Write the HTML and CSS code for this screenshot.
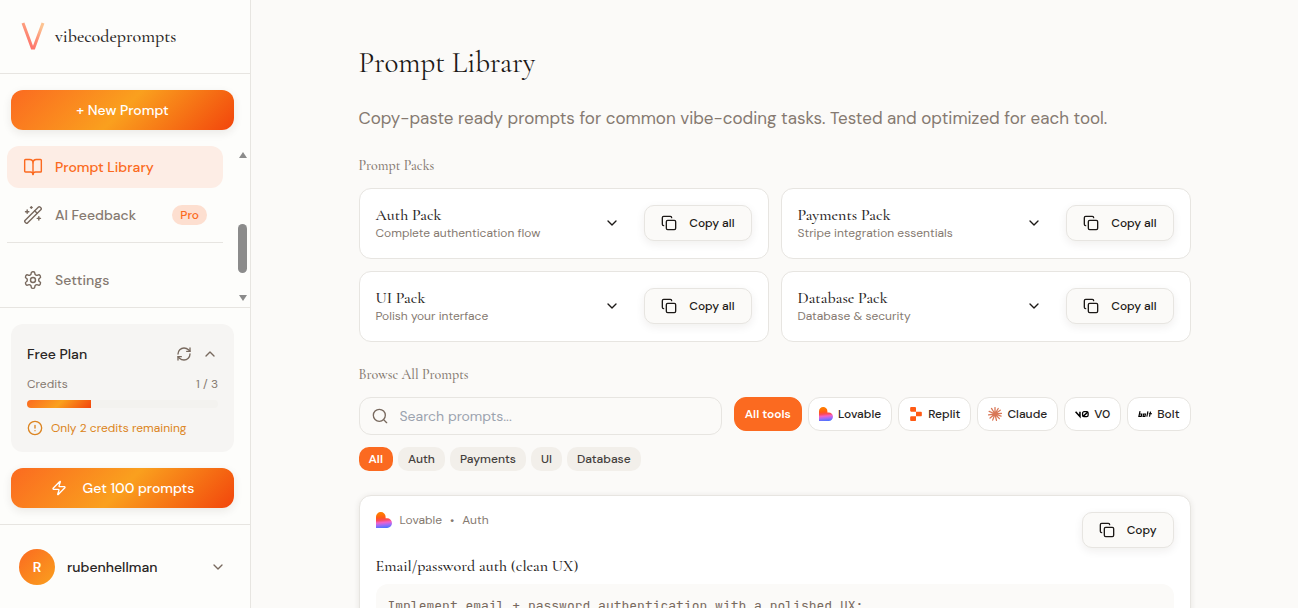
FILE: index.html
```html
<!DOCTYPE html>
<html lang="en">
<head>
<meta charset="utf-8">
<meta name="viewport" content="width=device-width, initial-scale=1">
<title>Prompt Library</title>
<link rel="stylesheet" href="styles.css">
</head>
<body>
<svg class="defs" aria-hidden="true">
  <defs>
    <linearGradient id="v-grad" x1="0" y1="1" x2="0.7" y2="0"><stop offset="0" stop-color="#ff6464"/><stop offset="0.5" stop-color="#fd8b74"/><stop offset="1" stop-color="#fdc391"/></linearGradient>
    <linearGradient id="love-grad" x1="0.4" y1="0" x2="0.5" y2="1"><stop offset="0.1" stop-color="#ff7a00"/><stop offset="0.35" stop-color="#ff5a1a"/><stop offset="0.5" stop-color="#fb4a5a"/><stop offset="0.65" stop-color="#f062c8"/><stop offset="0.8" stop-color="#a56af5"/><stop offset="1" stop-color="#4b73ff"/></linearGradient>
  </defs>
  <symbol id="copy" viewBox="0 0 24 24"><rect x="8" y="8" width="14" height="14" rx="2"/><path d="M4 16c-1.100 0-2-.9-2-2V4c0-1.100.9-2 2-2h10c1.100 0 2 .9 2 2"/></symbol>
  <symbol id="down" viewBox="0 0 24 24"><path d="m6 9 6 6 6-6"/></symbol>
  <symbol id="lovable" viewBox="0 0 24 24"><path fill="url(#love-grad)" stroke="none" d="M0 7.200a7.200 7.200 0 0 1 14.400 0v2.300h2.300a7.200 7.200 0 0 1 0 14.500H0z"/></symbol>
</svg>
<div class="app">
  <aside class="sidebar">
    <a class="brand" href="#">
      <svg class="brand-mark" viewBox="0 0 24 28" aria-hidden="true"><path d="M2 1 11.200 26h1.600L22 1" fill="none" stroke="url(#v-grad)" stroke-width="3"/></svg>
      <span>vibecodeprompts</span>
    </a>
    <div class="new-wrap"><button class="cta" type="button">+ New Prompt</button></div>
    <div class="nav-area">
      <nav class="nav">
        <a class="nav-item active" href="#"><svg class="icon i20" viewBox="0 0 24 24"><path d="M12 7v14"/><path d="M3 18a1 1 0 0 1-1-1V4a1 1 0 0 1 1-1h5a4 4 0 0 1 4 4 4 4 0 0 1 4-4h5a1 1 0 0 1 1 1v13a1 1 0 0 1-1 1h-6a3 3 0 0 0-3 3 3 3 0 0 0-3-3z"/></svg>Prompt Library</a>
        <a class="nav-item" href="#"><svg class="icon i20" viewBox="0 0 24 24"><path d="m21.640 3.640-1.280-1.280a1.210 1.210 0 0 0-1.720 0L2.360 18.640a1.210 1.210 0 0 0 0 1.720l1.280 1.280a1.200 1.200 0 0 0 1.720 0L21.640 5.360a1.200 1.200 0 0 0 0-1.720"/><path d="m14 7 3 3"/><path d="M5 6v4M19 14v4M10 2v2M7 8H3M21 16h-4M11 3H9"/></svg>AI Feedback<span class="pro">Pro</span></a>
        <div class="rule"></div>
        <a class="nav-item" href="#"><svg class="icon i20" viewBox="0 0 24 24"><path d="M12.220 2h-.440a2 2 0 0 0-2 2v.180a2 2 0 0 1-1 1.730l-.430.250a2 2 0 0 1-2 0l-.150-.080a2 2 0 0 0-2.730.730l-.220.380a2 2 0 0 0 .730 2.730l.150.100a2 2 0 0 1 1 1.720v.510a2 2 0 0 1-1 1.740l-.150.090a2 2 0 0 0-.730 2.730l.220.380a2 2 0 0 0 2.730.730l.150-.080a2 2 0 0 1 2 0l.430.250a2 2 0 0 1 1 1.730V20a2 2 0 0 0 2 2h.440a2 2 0 0 0 2-2v-.180a2 2 0 0 1 1-1.730l.430-.250a2 2 0 0 1 2 0l.150.080a2 2 0 0 0 2.730-.730l.220-.390a2 2 0 0 0-.730-2.730l-.150-.080a2 2 0 0 1-1-1.740v-.500a2 2 0 0 1 1-1.740l.150-.090a2 2 0 0 0 .730-2.730l-.220-.380a2 2 0 0 0-2.730-.730l-.150.080a2 2 0 0 1-2 0l-.430-.250a2 2 0 0 1-1-1.730V4a2 2 0 0 0-2-2z"/><circle cx="12" cy="12" r="3"/></svg>Settings</a>
      </nav>
      <div class="scrollbar" aria-hidden="true"><span class="arrow-up"></span><span class="thumb"></span><span class="arrow-down"></span></div>
    </div>
    <div class="plan-wrap">
      <section class="plan">
        <div class="plan-head">
          <h2>Free Plan</h2>
          <button class="bare" type="button" aria-label="Refresh credits"><svg class="icon i16" viewBox="0 0 24 24"><path d="M3 12a9 9 0 0 1 9-9 9.750 9.750 0 0 1 6.740 2.740L21 8"/><path d="M21 3v5h-5"/><path d="M21 12a9 9 0 0 1-9 9 9.750 9.750 0 0 1-6.740-2.740L3 16"/><path d="M8 16H3v5"/></svg></button>
          <button class="bare" type="button" aria-label="Collapse plan"><svg class="icon i16" viewBox="0 0 24 24"><path d="m18 15-6-6-6 6"/></svg></button>
        </div>
        <div class="credits"><span>Credits</span><span>1 / 3</span></div>
        <div class="meter"><div class="meter-fill" style="width:33.33%"></div></div>
        <p class="warn"><svg class="icon i16" viewBox="0 0 24 24"><circle cx="12" cy="12" r="10"/><path d="M12 8v4M12 16h.01"/></svg>Only 2 credits remaining</p>
      </section>
      <button class="cta" type="button"><svg class="icon i16" viewBox="0 0 24 24"><path d="M4 14a1 1 0 0 1-.780-1.630l9.900-10.200a.5.5 0 0 1 .860.460l-1.920 6.020A1 1 0 0 0 13 10h7a1 1 0 0 1 .780 1.630l-9.900 10.200a.5.5 0 0 1-.860-.460l1.920-6.020A1 1 0 0 0 11 14z"/></svg>Get 100 prompts</button>
    </div>
    <button class="user" type="button"><span class="avatar">R</span><span class="user-name">rubenhellman</span><svg class="icon i16"><use href="#down"/></svg></button>
  </aside>

  <main class="main">
    <div class="content">
      <h1>Prompt Library</h1>
      <p class="lead">Copy-paste ready prompts for common vibe-coding tasks. Tested and optimized for each tool.</p>
      <h2 class="section">Prompt Packs</h2>
      <div class="packs">
        <article class="pack"><div class="pack-text"><h3>Auth Pack</h3><p>Complete authentication flow</p></div><button class="bare dark" type="button" aria-label="Expand Auth Pack"><svg class="icon i16"><use href="#down"/></svg></button><button class="copy" type="button"><svg class="icon i16"><use href="#copy"/></svg>Copy all</button></article>
        <article class="pack"><div class="pack-text"><h3>Payments Pack</h3><p>Stripe integration essentials</p></div><button class="bare dark" type="button" aria-label="Expand Payments Pack"><svg class="icon i16"><use href="#down"/></svg></button><button class="copy" type="button"><svg class="icon i16"><use href="#copy"/></svg>Copy all</button></article>
        <article class="pack"><div class="pack-text"><h3>UI Pack</h3><p>Polish your interface</p></div><button class="bare dark" type="button" aria-label="Expand UI Pack"><svg class="icon i16"><use href="#down"/></svg></button><button class="copy" type="button"><svg class="icon i16"><use href="#copy"/></svg>Copy all</button></article>
        <article class="pack"><div class="pack-text"><h3>Database Pack</h3><p>Database &amp; security</p></div><button class="bare dark" type="button" aria-label="Expand Database Pack"><svg class="icon i16"><use href="#down"/></svg></button><button class="copy" type="button"><svg class="icon i16"><use href="#copy"/></svg>Copy all</button></article>
      </div>
      <h2 class="section browse">Browse All Prompts</h2>
      <div class="filters">
        <label class="search"><svg class="icon i16" viewBox="0 0 24 24"><circle cx="11" cy="11" r="9"/><path d="m22 22-4.600-4.600"/></svg><input type="search" placeholder="Search prompts..." aria-label="Search prompts"></label>
        <div class="tools">
          <button class="tool on" type="button">All tools</button>
          <button class="tool" type="button"><svg class="i14"><use href="#lovable"/></svg>Lovable</button>
          <button class="tool" type="button"><svg class="i14" viewBox="0 0 24 24"><path fill="#ff5a14" d="M2 1.500C2 .7 2.700 0 3.500 0h7c.8 0 1.500.7 1.500 1.500V8H3.500C2.700 8 2 7.300 2 6.500zM12 8h8.500c.8 0 1.500.7 1.500 1.500v5c0 .8-.7 1.500-1.500 1.500H12zM2 17.500c0-.8.7-1.500 1.500-1.500H12v6.500c0 .8-.7 1.500-1.500 1.500h-7C2.700 24 2 23.300 2 22.500z"/></svg>Replit</button>
          <button class="tool" type="button"><svg class="i14" viewBox="0 0 24 24"><path fill="none" stroke="#d97757" stroke-width="2.200" stroke-linecap="round" d="M12 12V1M12 12l5.500-9.500M12 12l9-6.500M12 12l11-1M12 12l10.500 3.500M12 12l7.500 8M12 12l2.500 11M12 12l-4 10.500M12 12l-8.500 7M12 12l-11 1.500M12 12 2 7.500M12 12 6 2.500"/></svg>Claude</button>
          <button class="tool" type="button"><svg class="i14" viewBox="0 0 24 24"><path fill="none" stroke="#000" stroke-width="2.600" d="m1 8 7.500 8.200V8M13.500 16.500 22 8.500"/><rect x="13" y="8" width="9.500" height="8.500" rx="2.500" fill="none" stroke="#000" stroke-width="2.200"/></svg>V0</button>
          <button class="tool" type="button"><svg class="i14" viewBox="0 0 24 24"><path fill="none" stroke="#000" stroke-width="2" d="M3.500 7 1.500 16h4l.9-4H2.500M9.500 12h3.200l-.8 4H8.700zM17 7.500l-1.800 9M21.500 8l-1.800 8.500M18.500 11.500H24"/></svg>Bolt</button>
        </div>
      </div>
      <div class="cats">
        <button class="cat on" type="button">All</button><button class="cat" type="button">Auth</button><button class="cat" type="button">Payments</button><button class="cat" type="button">UI</button><button class="cat" type="button">Database</button>
      </div>
      <article class="prompt">
        <div class="prompt-head">
          <p class="meta"><svg class="i16"><use href="#lovable"/></svg><span>Lovable</span><span>•</span><span>Auth</span></p>
          <button class="copy" type="button"><svg class="icon i16"><use href="#copy"/></svg>Copy</button>
        </div>
        <h3>Email/password auth (clean UX)</h3>
        <pre class="code">Implement email + password authentication with a polished UX:</pre>
      </article>
    </div>
  </main>
</div>
</body>
</html>
```
FILE: styles.css
```css
:root {
  --sans: "DM Sans", Inter, "Liberation Sans", sans-serif;
  --serif: "Cormorant Garamond", "Liberation Serif", serif;
  --ink: #292524;
  --muted: #857970;
  --line: #e7e5e1;
  --orange: #fb6a20;
  --fire: linear-gradient(135deg, #fb6a20 0%, #faa01e 50%, #f2450c 100%);
}
* { box-sizing: border-box; }
body { margin: 0; background: #fbfaf8; color: var(--ink); font: 14px/20px var(--sans); }
h1, h2, h3, p, pre { margin: 0; font-weight: 400; }
button, input { font: inherit; color: inherit; }
button { cursor: pointer; border: 0; }
a { color: inherit; text-decoration: none; }
svg { flex: none; display: block; }
.defs { position: absolute; width: 0; height: 0; }
.icon { fill: none; stroke: currentColor; stroke-width: 2; stroke-linecap: round; stroke-linejoin: round; }
.i14 { width: 14px; height: 14px; }
.i16 { width: 16px; height: 16px; }
.i20 { width: 20px; height: 20px; }

.app { display: flex; height: 100vh; overflow: hidden; }
.sidebar { flex: none; width: 251px; display: flex; flex-direction: column; background: #fdfdfb; border-right: 1px solid var(--line); }
.brand { display: flex; align-items: center; gap: 10px; padding: 22px 21px 23px; border-bottom: 1px solid var(--line); font: 500 18px/28px var(--serif); }
.brand-mark { width: 24px; height: 28px; }
.new-wrap { padding: 16px 16px 16px 11px; }
.cta { width: 100%; height: 40px; display: flex; align-items: center; justify-content: center; gap: 16px; padding: 0; border-radius: 12px; background: var(--fire); color: #fff; font-weight: 500; box-shadow: 0 3px 10px rgba(40, 30, 20, .09); }

.nav-area { flex: 1; min-height: 0; display: flex; justify-content: space-between; padding: 0 3px 0 7px; overflow: hidden; }
.nav { width: 216px; display: flex; flex-direction: column; gap: 6px; }
.nav-item { flex: none; display: flex; align-items: center; gap: 12px; height: 42px; padding: 0 16px; border-radius: 12px; color: var(--muted); font-weight: 500; }
.nav-item .icon { stroke-width: 1.7; color: #78695e; }
.nav-item.active, .nav-item.active .icon { color: var(--orange); }
.nav-item.active { background: #fdede5; }
.pro { margin-left: auto; padding: 0 8px; border-radius: 10px; background: #fddfd0; color: var(--orange); font-size: 12px; font-weight: 500; }
.rule { flex: none; height: 1px; background: var(--line); margin-bottom: 10px; }
.scrollbar { width: 9px; display: flex; flex-direction: column; align-items: center; padding: 6px 0; }
.arrow-up, .arrow-down { border: 4px solid transparent; }
.arrow-up { border-top: 0; border-bottom: 6px solid #8b8b8b; }
.arrow-down { border-bottom: 0; border-top: 6px solid #8b8b8b; margin-top: auto; }
.thumb { width: 9px; height: 49px; margin-top: 66px; border-radius: 5px; background: #8b8b8b; }

.plan-wrap { display: grid; gap: 16px; padding: 16px 16px 16px 11px; border-top: 1px solid var(--line); border-bottom: 1px solid var(--line); }
.plan { padding: 20px 16px 14px; border-radius: 12px; background: #f6f5f3; }
.plan-head { display: flex; align-items: center; gap: 2px; }
.plan-head h2 { flex: 1; font-size: 14px; font-weight: 500; }
.bare { display: grid; place-items: center; width: 24px; height: 20px; padding: 0; background: none; color: #78695e; }
.plan-head .bare:last-child { margin-right: -4px; }
.bare.dark { width: 32px; height: 36px; color: #1c1917; }
.credits { display: flex; justify-content: space-between; margin-top: 11px; font-size: 12px; line-height: 18px; color: var(--muted); }
.meter { height: 8px; margin-top: 7px; border-radius: 4px; background: #f3f2ef; overflow: hidden; }
.meter-fill { height: 100%; background: var(--fire); }
.warn { display: flex; align-items: center; gap: 8px; margin-top: 10px; font-size: 12px; color: #dc8420; }
.user { display: flex; align-items: center; gap: 12px; padding: 24px 24px 23px 19px; background: none; text-align: left; }
.avatar { display: grid; place-items: center; width: 36px; height: 36px; border-radius: 50%; background: linear-gradient(135deg, #fb6a20, #faa01e); color: #fff; font-weight: 600; }
.user-name { flex: 1; font-weight: 500; }
.user .icon { color: #78695e; }

.main { flex: 1; min-width: 0; padding: 41px 32px 0; overflow: hidden; }
.content { max-width: 832px; margin: 0 auto; }
h1 { font: 29px/44px var(--serif); color: #1c1917; }
.lead { margin-top: 19px; font-size: 17px; line-height: 28px; color: var(--muted); }
.section { margin-top: 24px; font: 500 14px/20px var(--serif); color: var(--muted); }
.section.browse { margin-top: 23px; }
.packs { display: grid; grid-template-columns: 1fr 1fr; gap: 12px; margin-top: 12px; }
.pack { display: flex; align-items: flex-start; padding: 16px; background: #fff; border: 1px solid var(--line); border-radius: 12px; }
.pack-text { flex: 1; }
.pack h3, .prompt h3 { font: 500 16px/20px var(--serif); }
.pack p { font-size: 12px; line-height: 17px; color: var(--muted); }
.copy { display: flex; align-items: center; gap: 12px; height: 36px; padding: 0 16px; background: #fbfaf8; border: 1px solid var(--line); border-radius: 10px; color: #1c1917; font-size: 12px; font-weight: 500; box-shadow: 0 3px 10px rgba(40, 30, 20, .07); }
.pack .copy { margin-left: 16px; }

.filters { display: flex; align-items: flex-start; gap: 12px; margin-top: 12px; }
.search { flex: 1; min-width: 0; display: flex; align-items: center; gap: 12px; height: 38px; padding: 0 12px; border: 1px solid var(--line); border-radius: 12px; color: #78695e; }
.search input { flex: 1; min-width: 0; padding: 0; border: 0; outline: 0; background: none; color: var(--ink); }
.search input::placeholder { color: #9ca3af; }
.tools { display: flex; gap: 6px; }
.tool { display: flex; align-items: center; gap: 5px; height: 34px; padding: 0 10px; background: #fff; border: 1px solid var(--line); border-radius: 12px; font-size: 12px; font-weight: 500; }
.cats { display: flex; gap: 5px; margin-top: 12px; }
.cat { height: 24px; padding: 0 10px; border-radius: 10px; background: #f2efea; color: #44403c; font-size: 12px; font-weight: 500; }
.tool.on, .cat.on { background: var(--orange); border-color: var(--orange); color: #fff; font-weight: 600; }

.prompt { margin-top: 24px; padding: 16px; background: #fff; border: 1px solid var(--line); border-radius: 12px; box-shadow: 0 1px 6px rgba(40, 30, 20, .09); }
.prompt-head { display: flex; align-items: flex-start; justify-content: space-between; }
.meta { display: flex; align-items: center; gap: 8px; font-size: 12px; line-height: 16px; color: var(--muted); }
.prompt h3 { margin-top: 8px; }
.code { margin-top: 8px; padding: 12px; border-radius: 12px; background: #fbfaf8; color: #78695e; font: 13px/20px "JetBrains Mono", "Liberation Mono", monospace; overflow: hidden; }
```
